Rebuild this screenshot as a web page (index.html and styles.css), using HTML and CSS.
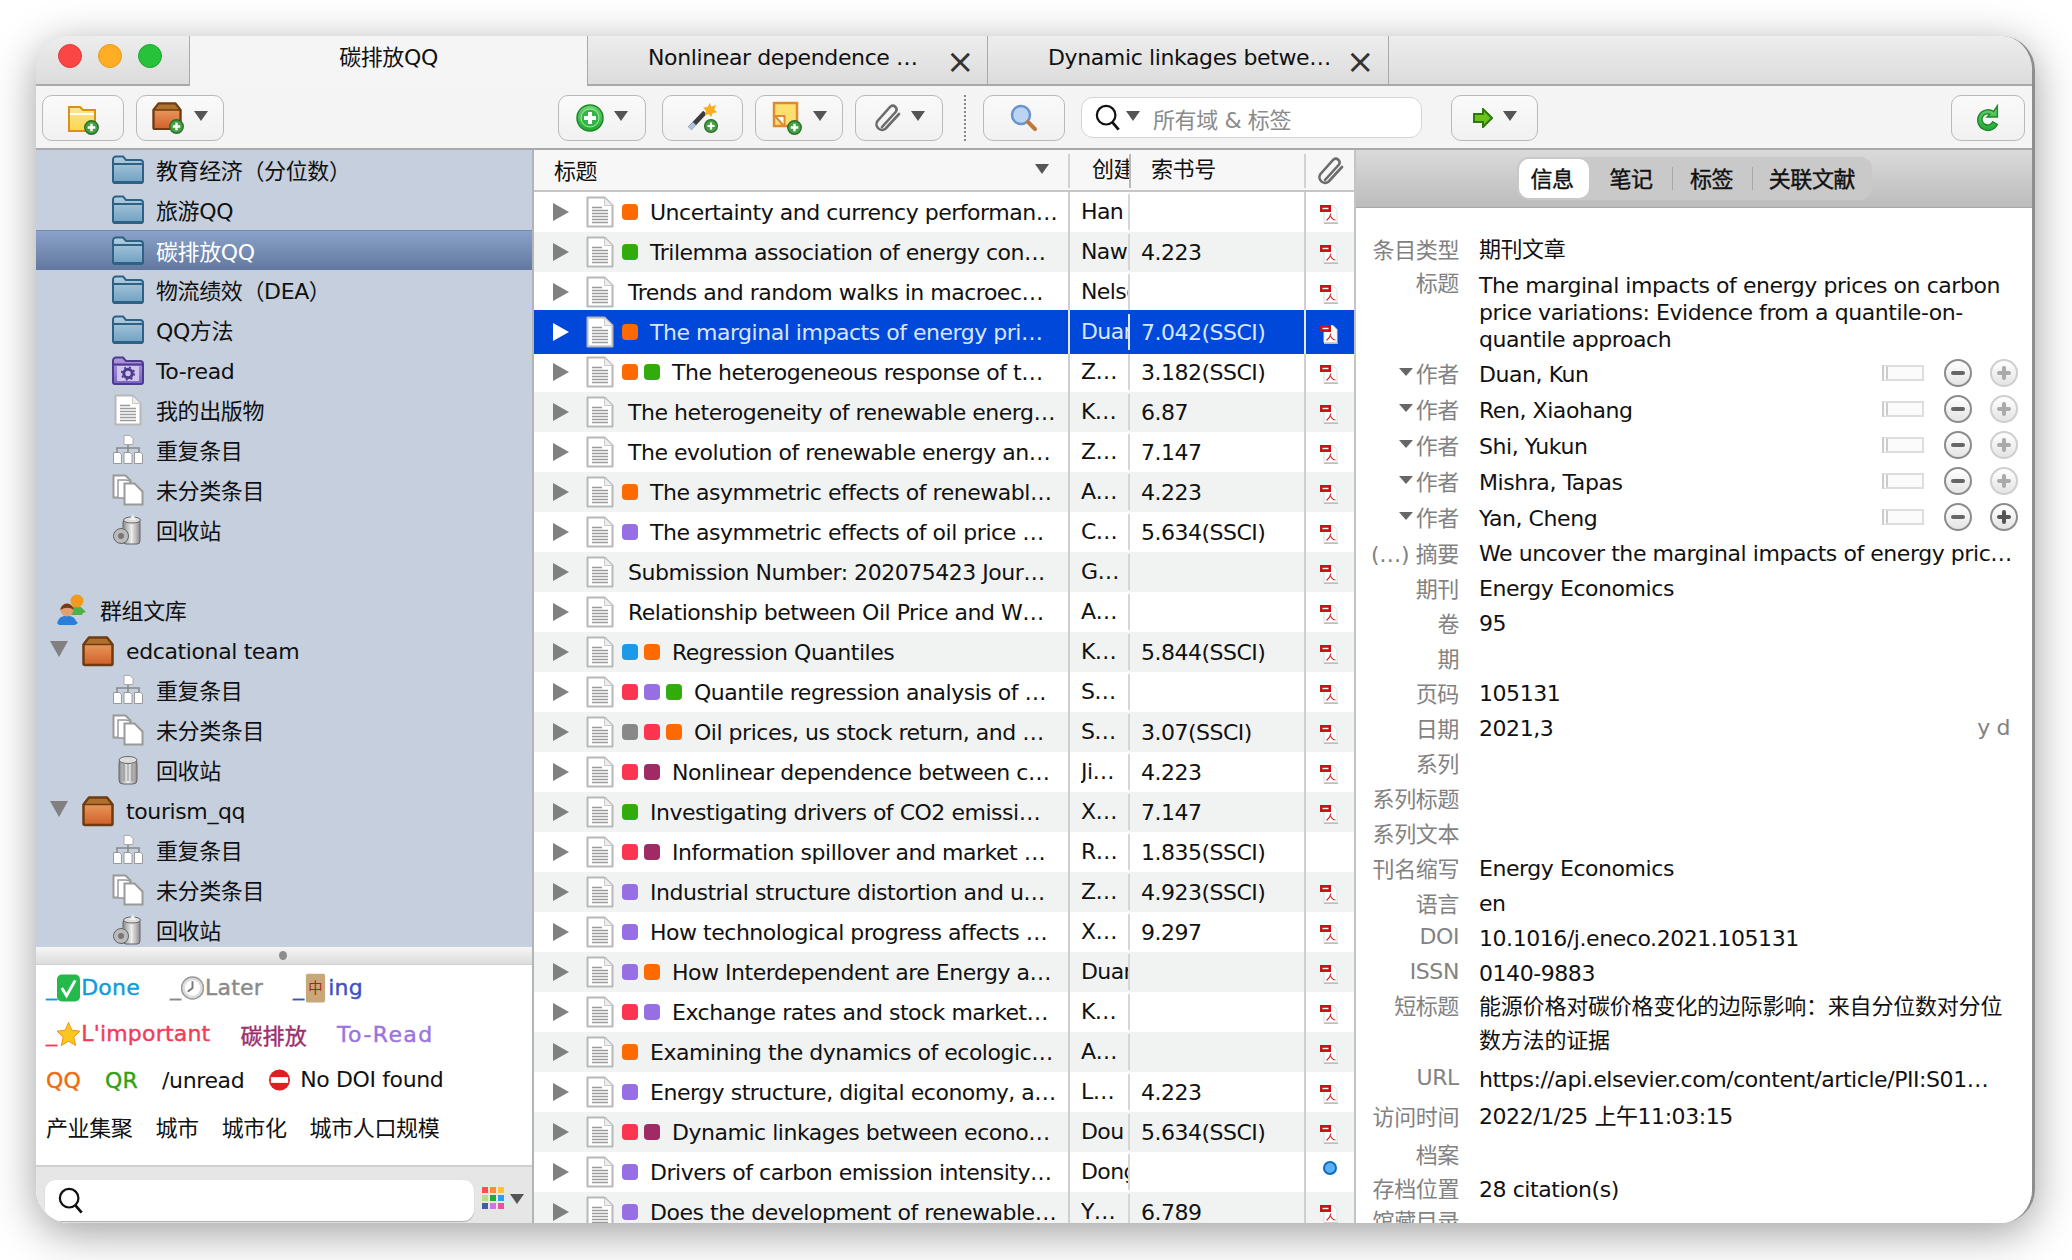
FILE: index.html
```html
<!DOCTYPE html>
<html lang="zh">
<head>
<meta charset="UTF-8">
<title>Zotero - 碳排放QQ</title>
<link rel="stylesheet" href="styles.css">
</head>
<body>
<svg class="defs" width="0" height="0">
  <defs>
    <linearGradient id="gBlue" x1="0" y1="0" x2="0" y2="1"><stop offset="0" stop-color="#b4cfe2"/><stop offset="1" stop-color="#6f9fc2"/></linearGradient>
    <linearGradient id="gPurple" x1="0" y1="0" x2="0" y2="1"><stop offset="0" stop-color="#b09ae0"/><stop offset="1" stop-color="#7c62c4"/></linearGradient>
    <linearGradient id="gBox" x1="0" y1="0" x2="0" y2="1"><stop offset="0" stop-color="#f0a86a"/><stop offset="1" stop-color="#d0602a"/></linearGradient>
    <linearGradient id="gYellow" x1="0" y1="0" x2="0" y2="1"><stop offset="0" stop-color="#fbe79e"/><stop offset="1" stop-color="#fbd64a"/></linearGradient>
    <linearGradient id="gGreen" x1="0" y1="0" x2="0" y2="1"><stop offset="0" stop-color="#6fd46f"/><stop offset="1" stop-color="#21a834"/></linearGradient>
    <linearGradient id="gTrash" x1="0" y1="0" x2="1" y2="0"><stop offset="0" stop-color="#8c8c8c"/><stop offset=".5" stop-color="#eee"/><stop offset="1" stop-color="#8c8c8c"/></linearGradient>
    <symbol id="doc" viewBox="0 0 28 32"><path d="M1.500 1.500h17l8 8v21h-25z" fill="#fff" stroke="#b8b8b8" stroke-width="2" stroke-linejoin="round"/><path d="M18.500 2v7.500h8" fill="#eee" stroke="#c8c8c8"/><path d="M6 11.500h10M6 14.500h16M6 17.500h16M6 20.500h16M6 23.500h16M6 26.500h16" stroke="#9a9a9a" stroke-width="1.400"/></symbol>
    <symbol id="folder" viewBox="0 0 32 30"><path d="M1 4.500a3 3 0 0 1 3-3h7l3 3.500h14a3 3 0 0 1 3 3v18a2 2 0 0 1-2 2H3a2 2 0 0 1-2-2z" fill="url(#gBlue)" stroke="#2e6285" stroke-width="2"/><path d="M1 9h30" stroke="#2e6285" stroke-width="2"/><path d="M2 27.500h28" stroke="#2e6285" stroke-width="3"/></symbol>
    <symbol id="smart" viewBox="0 0 32 30"><path d="M1 4.500a3 3 0 0 1 3-3h7l3 3.500h14a3 3 0 0 1 3 3v18a2 2 0 0 1-2 2H3a2 2 0 0 1-2-2z" fill="url(#gPurple)" stroke="#4e3b8e" stroke-width="2"/><path d="M1 8.500h30" stroke="#4e3b8e" stroke-width="2"/><rect x="5" y="10" width="22" height="15" fill="#cfc4ec"/><circle cx="16" cy="17.500" r="4.200" fill="none" stroke="#4e3b8e" stroke-width="3"/><circle cx="16" cy="17.500" r="6.200" fill="none" stroke="#4e3b8e" stroke-width="1.800" stroke-dasharray="2 2.900"/></symbol>
    <symbol id="dups" viewBox="0 0 32 32"><path d="M16 8v6M5 18v-4h22v4M16 14v4" stroke="#888" stroke-width="1.500" fill="none"/><path d="M12 1.500h6l3 3v6h-9z" fill="#fff" stroke="#aaa"/><path d="M1.500 18.500h6l2 2v9h-8zM12 18.500h6l2 2v9h-8zM22.500 18.500h6l2 2v9h-8z" fill="#fff" stroke="#999"/></symbol>
    <symbol id="unfiled" viewBox="0 0 32 32"><path d="M1.500 1.500h12l5 5v17h-17z" fill="#fff" stroke="#9a9a9a" stroke-width="2"/><path d="M6 6h8l4 1v17H6z" fill="#fff" stroke="#9a9a9a" stroke-width="1.500"/><path d="M12.500 9.500h10l8 8v13h-18z" fill="#fff" stroke="#9a9a9a" stroke-width="2"/></symbol>
    <symbol id="trashfull" viewBox="0 0 32 32"><rect x="11" y="5" width="17" height="25" rx="3" fill="url(#gTrash)" stroke="#666"/><ellipse cx="20" cy="6" rx="8.500" ry="3" fill="#ddd" stroke="#666"/><path d="M17 6l4-6 3 6z" fill="#eee"/><circle cx="9" cy="22" r="7.500" fill="#bbb" stroke="#666"/><circle cx="9" cy="22" r="3" fill="#777"/></symbol>
    <symbol id="trash" viewBox="0 0 32 32"><rect x="7" y="5" width="18" height="25" rx="4" fill="url(#gTrash)" stroke="#666"/><ellipse cx="16" cy="6" rx="9" ry="3.500" fill="#ddd" stroke="#666"/><path d="M12 10v17M16 10v17M20 10v17" stroke="#888"/></symbol>
    <symbol id="group" viewBox="0 0 32 32"><path d="M12 15c2-4 13-4 15 0l3 3-3 1-1 2H13z" fill="#4eb04a"/><circle cx="21" cy="7" r="6.500" fill="#f29a1e"/><path d="M2 27c2-7 16-7 18 0l2 2-3 2H3l-2-2z" fill="#2a80d8"/><circle cx="11" cy="16" r="6.500" fill="#e0a070"/><path d="M4.500 16a6.500 6.500 0 0 1 13 0c-3-3-9-3-13 0z" fill="#7a3a12"/></symbol>
    <symbol id="box" viewBox="0 0 32 30"><path d="M7 1.500h18l5.500 7v19a1.500 1.500 0 0 1-1.500 1.500H3a1.500 1.500 0 0 1-1.500-1.500v-19z" fill="url(#gBox)" stroke="#6e3c10" stroke-width="2.500" stroke-linejoin="round"/><path d="M7 2h18l5 6.500H2z" fill="#b0702e" stroke="#6e3c10" stroke-width="1.500"/></symbol>
    <symbol id="plusbadge" viewBox="0 0 14 14"><circle cx="7" cy="7" r="6.300" fill="#45a045" stroke="#2a6e2a" stroke-width="1.300"/><path d="M7 3.500v7M3.500 7h7" stroke="#fff" stroke-width="2.200"/></symbol>
    <symbol id="pdf" viewBox="0 0 18 19"><path d="M4 .5h9l4 4v13H4z" fill="#fff" stroke="#dcdcdc"/><rect x="0" y="0" width="11" height="7" fill="#c81414"/><rect x="2.500" y="2.800" width="6" height="1.400" fill="#fff"/><path d="M11 8.500c-.5 2-2 5-4.500 7M10.500 11c1 2 3 4 5 4" fill="none" stroke="#d83030" stroke-width="1.100"/><path d="M4 18.300h14" stroke="#bdbdbd" stroke-width="1.400"/></symbol>
    <symbol id="caret" viewBox="0 0 14 10"><path d="M0 0h14L7 10z" fill="#555"/></symbol>
    <symbol id="lens" viewBox="0 0 28 30"><circle cx="12" cy="12" r="10" fill="none" stroke="#111" stroke-width="2.400"/><path d="M18.500 19.500l7 8" stroke="#111" stroke-width="3"/></symbol>
    <symbol id="clip" viewBox="0 0 28 28"><path d="M9 23L23 7.500a3.800 3.800 0 0 0-5.500-5L4.500 17a5.600 5.600 0 0 0 8.200 7.500L26 10" fill="none" stroke="#6c6c6c" stroke-width="2.600" stroke-linecap="round"/></symbol>
  </defs>
</svg>

<div class="window">
  <div class="tabbar">
    <div class="lights"><i class="light red"></i><i class="light amber"></i><i class="light green"></i></div>
    <div class="tab active">碳排放QQ</div>
    <div class="tab"><span class="tab-name">Nonlinear dependence …</span><span class="tab-x">×</span></div>
    <div class="tab third"><span class="tab-name">Dynamic linkages betwe…</span><span class="tab-x">×</span></div>
  </div>

  <div class="toolbar">
    <button class="btn w82">
      <svg class="ic32" viewBox="0 0 32 32"><path d="M2 5h11l3 3h12v21H2z" fill="url(#gYellow)" stroke="#d8921a" stroke-width="2"/><path d="M3 12h24" stroke="#fff" stroke-width="2"/><use href="#plusbadge" x="17" y="18" width="15" height="15"/></svg>
    </button>
    <button class="btn w88">
      <svg class="ic32" viewBox="0 0 32 34"><use href="#box" x="0" y="1" width="30" height="28"/><use href="#plusbadge" x="17" y="18" width="15" height="15"/></svg>
      <svg class="caret"><use href="#caret"/></svg>
    </button>
    <button class="btn w88 gap-main">
      <svg class="ic28" viewBox="0 0 28 28"><circle cx="14" cy="14" r="13" fill="url(#gGreen)" stroke="#188a28" stroke-width="1.500"/><circle cx="14" cy="14" r="9" fill="#35b44a" stroke="#a8e8a8"/><path d="M14 8v12M8 14h12" stroke="#fff" stroke-width="4"/></svg>
      <svg class="caret"><use href="#caret"/></svg>
    </button>
    <button class="btn w81 gap-wand">
      <svg class="ic32" viewBox="0 0 34 34"><path d="M3 28L19 11" stroke="#3c3c3c" stroke-width="5"/><path d="M3 28l5-5" stroke="#a8c4e0" stroke-width="5"/><path d="M24 1l2 4 5-2-2 5 3 3-5 1-1 4-3-3-4 1 1-5-3-3 5-1z" fill="#f7b020"/><use href="#plusbadge" x="18" y="18" width="15" height="15"/></svg>
    </button>
    <button class="btn w88">
      <svg class="ic32" viewBox="0 0 32 34"><rect x="3" y="2" width="23" height="23" fill="#fbe070" stroke="#e08a30" stroke-width="2.500"/><path d="M3.500 15h10v10" fill="#fff" stroke="#e08a30" stroke-width="2"/><path d="M4 15l9 10" stroke="#e08a30" stroke-width="2"/><use href="#plusbadge" x="16" y="19" width="15" height="15"/></svg>
      <svg class="caret"><use href="#caret"/></svg>
    </button>
    <button class="btn w88">
      <svg class="ic28"><use href="#clip"/></svg>
      <svg class="caret"><use href="#caret"/></svg>
    </button>
    <div class="dots"></div>
    <button class="btn w82 gap-sep">
      <svg class="ic28" viewBox="0 0 28 28"><circle cx="11" cy="11" r="9" fill="#bcd4f4" stroke="#6a94cc" stroke-width="2.500"/><path d="M18 18l7 7" stroke="#c07838" stroke-width="4" stroke-linecap="round"/></svg>
    </button>
    <div class="search-top">
      <svg class="lens"><use href="#lens"/></svg>
      <svg class="caret"><use href="#caret"/></svg>
      <span class="placeholder">所有域 &amp; 标签</span>
    </div>
    <button class="btn w86 gap-search">
      <svg class="ic20" viewBox="0 0 20 20"><path d="M1 6h9V1l9 9-9 9v-5H1z" fill="#6cc01c" stroke="#2c7a0c" stroke-width="2"/></svg>
      <svg class="caret"><use href="#caret"/></svg>
    </button>
    <button class="btn w74 push-right">
      <svg class="ic28" viewBox="0 0 28 32"><path d="M20 9A11 11 0 1 0 24 23l-5-3a6 6 0 1 1-3-8l-3 3 11 0 0-12z" fill="url(#gGreen)" stroke="#1e8a30" stroke-width="1.500"/></svg>
    </button>
  </div>

  <div class="main">
    <aside class="sidebar">
      <div class="tree">
        <div class="node"><svg class="nic"><use href="#folder"/></svg>教育经济（分位数）</div>
        <div class="node"><svg class="nic"><use href="#folder"/></svg>旅游QQ</div>
        <div class="node selected"><svg class="nic"><use href="#folder"/></svg>碳排放QQ</div>
        <div class="node"><svg class="nic"><use href="#folder"/></svg>物流绩效（DEA）</div>
        <div class="node"><svg class="nic"><use href="#folder"/></svg>QQ方法</div>
        <div class="node lat"><svg class="nic"><use href="#smart"/></svg>To-read</div>
        <div class="node"><svg class="nic"><use href="#doc"/></svg>我的出版物</div>
        <div class="node"><svg class="nic"><use href="#dups"/></svg>重复条目</div>
        <div class="node"><svg class="nic"><use href="#unfiled"/></svg>未分类条目</div>
        <div class="node"><svg class="nic"><use href="#trashfull"/></svg>回收站</div>
        <div class="node"></div>
        <div class="node top"><svg class="nic"><use href="#group"/></svg>群组文库</div>
        <div class="node lib lat"><i class="tree-open"></i><svg class="nic"><use href="#box"/></svg>edcational team</div>
        <div class="node"><svg class="nic"><use href="#dups"/></svg>重复条目</div>
        <div class="node"><svg class="nic"><use href="#unfiled"/></svg>未分类条目</div>
        <div class="node"><svg class="nic"><use href="#trash"/></svg>回收站</div>
        <div class="node lib lat"><i class="tree-open"></i><svg class="nic"><use href="#box"/></svg>tourism_qq</div>
        <div class="node"><svg class="nic"><use href="#dups"/></svg>重复条目</div>
        <div class="node"><svg class="nic"><use href="#unfiled"/></svg>未分类条目</div>
        <div class="node"><svg class="nic"><use href="#trashfull"/></svg>回收站</div>
      </div>
      <div class="splitter"><i class="grip"></i></div>
      <div class="tags">
        <div class="tagrow wide">
          <span class="c-done">_<svg class="emoji" viewBox="0 0 24 30"><rect x="0" y="1" width="24" height="28" rx="5" fill="#25b84a"/><path d="M5 15l5 8 9-16" fill="none" stroke="#fff" stroke-width="3"/></svg>Done</span>
          <span class="c-later">_<svg class="emoji" viewBox="0 0 24 30"><circle cx="12" cy="15" r="11.500" fill="#ddd" stroke="#999" stroke-width="1.500"/><circle cx="12" cy="15" r="8" fill="#fff"/><path d="M12 8v7l-5 4" fill="none" stroke="#777" stroke-width="2"/></svg>Later</span>
          <span class="c-ing">_<svg class="emoji" viewBox="0 0 24 30"><rect x="2" y="0" width="20" height="30" rx="2" fill="#c8a878"/><text x="12" y="20" class="tile">中</text></svg>ing</span>
        </div>
        <div class="tagrow wide">
          <span class="c-imp">_<svg class="emoji" viewBox="0 0 24 30"><path d="M12 3l3.500 8 8.500 1-6.500 6 2 9-7.500-4.500L4.500 27l2-9L0 12l8.500-1z" fill="#f8c820" stroke="#f09010"/></svg>L'important</span>
          <span class="c-carbon">碳排放</span>
          <span class="c-read">To-Read</span>
        </div>
        <div class="tagrow">
          <span class="c-qq">QQ</span>
          <span class="c-qr">QR</span>
          <span>/unread</span>
          <span><svg class="emoji noentry" viewBox="0 0 24 30"><circle cx="12" cy="15" r="11" fill="#e02020"/><rect x="3" y="12" width="18" height="6" fill="#fff"/></svg>No DOI found</span>
        </div>
        <div class="tagrow cjk">
          <span>产业集聚</span><span>城市</span><span>城市化</span><span>城市人口规模</span>
        </div>
      </div>
      <div class="filter">
        <div class="filter-box"><svg class="lens"><use href="#lens"/></svg></div>
        <div class="swatches">
          <i class="s1"></i><i class="s2"></i><i class="s3"></i><i class="s4"></i><i class="s5"></i><i class="s6"></i><i class="s7"></i><i class="s8"></i><i class="s9"></i>
        </div>
        <svg class="caret"><use href="#caret"/></svg>
      </div>
    </aside>

    <section class="list">
      <div class="list-head">
        <div class="h-title"><span>标题</span><svg class="caret"><use href="#caret"/></svg></div>
        <div class="h-creator"><span>创建</span></div>
        <div class="h-call">索书号</div>
        <div class="h-att"><svg class="ic26"><use href="#clip"/></svg></div>
      </div>
      <div class="rows">
        <div class="row"><div class="c-title"><i class="tri"></i><svg class="doc"><use href="#doc"/></svg><i class="tag orange"></i><span class="t">Uncertainty and currency performan…</span></div><div class="c-creator"><span>Han</span></div><div class="c-call"></div><div class="c-att"><svg class="pdf"><use href="#pdf"/></svg></div></div>
        <div class="row"><div class="c-title"><i class="tri"></i><svg class="doc"><use href="#doc"/></svg><i class="tag green"></i><span class="t">Trilemma association of energy con…</span></div><div class="c-creator"><span>Nawaz</span></div><div class="c-call">4.223</div><div class="c-att"><svg class="pdf"><use href="#pdf"/></svg></div></div>
        <div class="row"><div class="c-title"><i class="tri"></i><svg class="doc"><use href="#doc"/></svg><span class="t">Trends and random walks in macroec…</span></div><div class="c-creator"><span>Nelson</span></div><div class="c-call"></div><div class="c-att"><svg class="pdf"><use href="#pdf"/></svg></div></div>
        <div class="row current"><div class="c-title"><i class="tri"></i><svg class="doc"><use href="#doc"/></svg><i class="tag orange"></i><span class="t">The marginal impacts of energy pri…</span></div><div class="c-creator"><span>Duan</span></div><div class="c-call">7.042(SSCI)</div><div class="c-att"><svg class="pdf"><use href="#pdf"/></svg></div></div>
        <div class="row"><div class="c-title"><i class="tri"></i><svg class="doc"><use href="#doc"/></svg><i class="tag orange"></i><i class="tag green"></i><span class="t">The heterogeneous response of t…</span></div><div class="c-creator"><span>Z…</span></div><div class="c-call">3.182(SSCI)</div><div class="c-att"><svg class="pdf"><use href="#pdf"/></svg></div></div>
        <div class="row"><div class="c-title"><i class="tri"></i><svg class="doc"><use href="#doc"/></svg><span class="t">The heterogeneity of renewable energ…</span></div><div class="c-creator"><span>K…</span></div><div class="c-call">6.87</div><div class="c-att"><svg class="pdf"><use href="#pdf"/></svg></div></div>
        <div class="row"><div class="c-title"><i class="tri"></i><svg class="doc"><use href="#doc"/></svg><span class="t">The evolution of renewable energy an…</span></div><div class="c-creator"><span>Z…</span></div><div class="c-call">7.147</div><div class="c-att"><svg class="pdf"><use href="#pdf"/></svg></div></div>
        <div class="row"><div class="c-title"><i class="tri"></i><svg class="doc"><use href="#doc"/></svg><i class="tag orange"></i><span class="t">The asymmetric effects of renewabl…</span></div><div class="c-creator"><span>A…</span></div><div class="c-call">4.223</div><div class="c-att"><svg class="pdf"><use href="#pdf"/></svg></div></div>
        <div class="row"><div class="c-title"><i class="tri"></i><svg class="doc"><use href="#doc"/></svg><i class="tag purple"></i><span class="t">The asymmetric effects of oil price …</span></div><div class="c-creator"><span>C…</span></div><div class="c-call">5.634(SSCI)</div><div class="c-att"><svg class="pdf"><use href="#pdf"/></svg></div></div>
        <div class="row"><div class="c-title"><i class="tri"></i><svg class="doc"><use href="#doc"/></svg><span class="t">Submission Number: 202075423 Jour…</span></div><div class="c-creator"><span>G…</span></div><div class="c-call"></div><div class="c-att"><svg class="pdf"><use href="#pdf"/></svg></div></div>
        <div class="row"><div class="c-title"><i class="tri"></i><svg class="doc"><use href="#doc"/></svg><span class="t">Relationship between Oil Price and W…</span></div><div class="c-creator"><span>A…</span></div><div class="c-call"></div><div class="c-att"><svg class="pdf"><use href="#pdf"/></svg></div></div>
        <div class="row"><div class="c-title"><i class="tri"></i><svg class="doc"><use href="#doc"/></svg><i class="tag blue"></i><i class="tag orange"></i><span class="t">Regression Quantiles</span></div><div class="c-creator"><span>K…</span></div><div class="c-call">5.844(SSCI)</div><div class="c-att"><svg class="pdf"><use href="#pdf"/></svg></div></div>
        <div class="row"><div class="c-title"><i class="tri"></i><svg class="doc"><use href="#doc"/></svg><i class="tag red"></i><i class="tag purple"></i><i class="tag green"></i><span class="t">Quantile regression analysis of …</span></div><div class="c-creator"><span>S…</span></div><div class="c-call"></div><div class="c-att"><svg class="pdf"><use href="#pdf"/></svg></div></div>
        <div class="row"><div class="c-title"><i class="tri"></i><svg class="doc"><use href="#doc"/></svg><i class="tag grey"></i><i class="tag red"></i><i class="tag orange"></i><span class="t">Oil prices, us stock return, and …</span></div><div class="c-creator"><span>S…</span></div><div class="c-call">3.07(SSCI)</div><div class="c-att"><svg class="pdf"><use href="#pdf"/></svg></div></div>
        <div class="row"><div class="c-title"><i class="tri"></i><svg class="doc"><use href="#doc"/></svg><i class="tag red"></i><i class="tag maroon"></i><span class="t">Nonlinear dependence between c…</span></div><div class="c-creator"><span>Ji…</span></div><div class="c-call">4.223</div><div class="c-att"><svg class="pdf"><use href="#pdf"/></svg></div></div>
        <div class="row"><div class="c-title"><i class="tri"></i><svg class="doc"><use href="#doc"/></svg><i class="tag green"></i><span class="t">Investigating drivers of CO2 emissi…</span></div><div class="c-creator"><span>X…</span></div><div class="c-call">7.147</div><div class="c-att"><svg class="pdf"><use href="#pdf"/></svg></div></div>
        <div class="row"><div class="c-title"><i class="tri"></i><svg class="doc"><use href="#doc"/></svg><i class="tag red"></i><i class="tag maroon"></i><span class="t">Information spillover and market …</span></div><div class="c-creator"><span>R…</span></div><div class="c-call">1.835(SSCI)</div><div class="c-att"></div></div>
        <div class="row"><div class="c-title"><i class="tri"></i><svg class="doc"><use href="#doc"/></svg><i class="tag purple"></i><span class="t">Industrial structure distortion and u…</span></div><div class="c-creator"><span>Z…</span></div><div class="c-call">4.923(SSCI)</div><div class="c-att"><svg class="pdf"><use href="#pdf"/></svg></div></div>
        <div class="row"><div class="c-title"><i class="tri"></i><svg class="doc"><use href="#doc"/></svg><i class="tag purple"></i><span class="t">How technological progress affects …</span></div><div class="c-creator"><span>X…</span></div><div class="c-call">9.297</div><div class="c-att"><svg class="pdf"><use href="#pdf"/></svg></div></div>
        <div class="row"><div class="c-title"><i class="tri"></i><svg class="doc"><use href="#doc"/></svg><i class="tag purple"></i><i class="tag orange"></i><span class="t">How Interdependent are Energy a…</span></div><div class="c-creator"><span>Duan</span></div><div class="c-call"></div><div class="c-att"><svg class="pdf"><use href="#pdf"/></svg></div></div>
        <div class="row"><div class="c-title"><i class="tri"></i><svg class="doc"><use href="#doc"/></svg><i class="tag red"></i><i class="tag purple"></i><span class="t">Exchange rates and stock market…</span></div><div class="c-creator"><span>K…</span></div><div class="c-call"></div><div class="c-att"><svg class="pdf"><use href="#pdf"/></svg></div></div>
        <div class="row"><div class="c-title"><i class="tri"></i><svg class="doc"><use href="#doc"/></svg><i class="tag orange"></i><span class="t">Examining the dynamics of ecologic…</span></div><div class="c-creator"><span>A…</span></div><div class="c-call"></div><div class="c-att"><svg class="pdf"><use href="#pdf"/></svg></div></div>
        <div class="row"><div class="c-title"><i class="tri"></i><svg class="doc"><use href="#doc"/></svg><i class="tag purple"></i><span class="t">Energy structure, digital economy, a…</span></div><div class="c-creator"><span>L…</span></div><div class="c-call">4.223</div><div class="c-att"><svg class="pdf"><use href="#pdf"/></svg></div></div>
        <div class="row"><div class="c-title"><i class="tri"></i><svg class="doc"><use href="#doc"/></svg><i class="tag red"></i><i class="tag maroon"></i><span class="t">Dynamic linkages between econo…</span></div><div class="c-creator"><span>Dou</span></div><div class="c-call">5.634(SSCI)</div><div class="c-att"><svg class="pdf"><use href="#pdf"/></svg></div></div>
        <div class="row"><div class="c-title"><i class="tri"></i><svg class="doc"><use href="#doc"/></svg><i class="tag purple"></i><span class="t">Drivers of carbon emission intensity…</span></div><div class="c-creator"><span>Dong</span></div><div class="c-call"></div><div class="c-att"><i class="dot"></i></div></div>
        <div class="row"><div class="c-title"><i class="tri"></i><svg class="doc"><use href="#doc"/></svg><i class="tag purple"></i><span class="t">Does the development of renewable…</span></div><div class="c-creator"><span>Y…</span></div><div class="c-call">6.789</div><div class="c-att"><svg class="pdf"><use href="#pdf"/></svg></div></div>
      </div>
    </section>

    <section class="panel">
      <div class="panel-head">
        <div class="seg">
          <span class="seg-item on">信息</span>
          <span class="seg-item w83">笔记</span>
          <span class="seg-item w80 sep">标签</span>
          <span class="seg-item w118 sep">关联文献</span>
        </div>
      </div>
      <div class="fields">
        <div class="f"><label>条目类型</label><div class="v">期刊文章</div></div>
        <div class="f multi"><label>标题</label><div class="v">The marginal impacts of energy prices on carbon price variations: Evidence from a quantile-on-quantile approach</div></div>
        <div class="f author"><label><i class="fold"></i>作者</label><div class="v">Duan, Kun</div><i class="mode"></i><i class="round minus"></i><i class="round plus"></i></div>
        <div class="f author"><label><i class="fold"></i>作者</label><div class="v">Ren, Xiaohang</div><i class="mode"></i><i class="round minus"></i><i class="round plus"></i></div>
        <div class="f author"><label><i class="fold"></i>作者</label><div class="v">Shi, Yukun</div><i class="mode"></i><i class="round minus"></i><i class="round plus"></i></div>
        <div class="f author"><label><i class="fold"></i>作者</label><div class="v">Mishra, Tapas</div><i class="mode"></i><i class="round minus"></i><i class="round plus"></i></div>
        <div class="f author"><label><i class="fold"></i>作者</label><div class="v">Yan, Cheng</div><i class="mode"></i><i class="round minus"></i><i class="round plus dark"></i></div>
        <div class="f"><label>(…) 摘要</label><div class="v">We uncover the marginal impacts of energy pric…</div></div>
        <div class="f"><label>期刊</label><div class="v">Energy Economics</div></div>
        <div class="f"><label>卷</label><div class="v">95</div></div>
        <div class="f"><label>期</label><div class="v"></div></div>
        <div class="f"><label>页码</label><div class="v">105131</div></div>
        <div class="f"><label>日期</label><div class="v">2021,3</div><span class="ymd">y d</span></div>
        <div class="f"><label>系列</label><div class="v"></div></div>
        <div class="f"><label>系列标题</label><div class="v"></div></div>
        <div class="f"><label>系列文本</label><div class="v"></div></div>
        <div class="f"><label>刊名缩写</label><div class="v">Energy Economics</div></div>
        <div class="f"><label>语言</label><div class="v">en</div></div>
        <div class="f"><label>DOI</label><div class="v">10.1016/j.eneco.2021.105131</div></div>
        <div class="f"><label>ISSN</label><div class="v">0140-9883</div></div>
        <div class="f short"><label>短标题</label><div class="v">能源价格对碳价格变化的边际影响：来自分位数对分位数方法的证据</div></div>
        <div class="f h37"><label>URL</label><div class="v">https://api.elsevier.com/content/article/PII:S01…</div></div>
        <div class="f h37"><label>访问时间</label><div class="v">2022/1/25 上午11:03:15</div></div>
        <div class="f h40"><label>档案</label><div class="v"></div></div>
        <div class="f h30"><label>存档位置</label><div class="v">28 citation(s)</div></div>
        <div class="f"><label>馆藏目录</label><div class="v"></div></div>
      </div>
    </section>
  </div>
</div>
</body>
</html>
```

FILE: styles.css
```css
* {
    box-sizing: border-box;
}
html, body {
    margin: 0;
    height: 100%;
    background: #fff;
    overflow: hidden;
}
body {
    padding: 36px 0 0 36px;
    font-family: "DejaVu Sans", "Noto Sans CJK SC", sans-serif;
    font-size: 22px;
    letter-spacing: -0.38px;
    color: #111;
}
.defs {
    display: block;
    height: 0;
}
svg {
    display: block;
    flex: none;
}
i {
    display: block;
    flex: none;
}

.window {
    width: 1999px;
    height: 1187px;
    border-radius: 34px;
    overflow: hidden;
    display: flex;
    flex-direction: column;
    border-right: 3px solid #8e8e8e;
    box-shadow: 0 10px 44px rgba(0, 0, 0, 0.38);
    background: #f4f4f4;
}

/* tabs */
.tabbar {
    height: 50px;
    flex: none;
    display: flex;
    background: linear-gradient(#ededed, #dcdcdc);
    border-bottom: 2px solid #a9a9a9;
}
.lights {
    width: 153px;
    display: flex;
    gap: 16px;
    padding: 8px 0 0 22px;
}
.light {
    width: 24px;
    height: 24px;
    border-radius: 50%;
}
.light.red { background: #fb4646; border: 1px solid #e23a3a; }
.light.amber { background: #ffad24; border: 1px solid #e89a1a; }
.light.green { background: #27c13a; border: 1px solid #1fa52f; }
.tab {
    width: 400px;
    height: 50px;
    display: flex;
    align-items: center;
    padding: 0 0 8px 60px;
    border-right: 1px solid #a9a9a9;
    white-space: nowrap;
}
.tab.third {
    width: 401px;
}
.tab.active {
    width: 399px;
    background: #f5f5f5;
    border-left: 1px solid #a9a9a9;
    justify-content: center;
    padding: 0 0 12px 0;
    height: 50px;
}
.tab-name {
    width: 312px;
    overflow: hidden;
}
.tab-x {
    font-size: 34px;
    line-height: 30px;
    color: #333;
    margin: 8px 0 0 -14px;
}

/* toolbar */
.toolbar {
    height: 64px;
    flex: none;
    display: flex;
    align-items: flex-start;
    padding: 9px 7px 0 6px;
    gap: 12px;
    background: #f4f4f4;
    border-bottom: 2px solid #a9a9a9;
}
.btn {
    height: 46px;
    padding: 0;
    display: flex;
    align-items: center;
    justify-content: center;
    gap: 10px;
    background: linear-gradient(#fafafa, #f1f1f1);
    border: 1px solid #b9b9b9;
    border-radius: 10px;
}
.w74 { width: 74px; }
.w81 { width: 81px; }
.w82 { width: 82px; }
.w86 { width: 87px; }
.w88 { width: 88px; }
.gap-main { margin-left: 322px; }
.gap-wand { margin-left: 4px; }
.gap-sep { margin-left: 5px; }
.gap-search { margin-left: 17px; }
.push-right { margin-left: auto; }
.caret {
    width: 14px;
    height: 10px;
    margin-bottom: 4px;
}
.ic20 { width: 20px; height: 20px; }
.ic26 { width: 28px; height: 28px; }
.ic28 { width: 28px; height: 30px; }
.ic32 { width: 32px; height: 34px; }
.dots {
    width: 2px;
    height: 46px;
    margin-left: 9px;
    border-left: 2px dotted #888;
}
.search-top {
    width: 341px;
    height: 41px;
    margin: 2px 0 0 4px;
    display: flex;
    align-items: center;
    padding-left: 13px;
    gap: 5px;
    background: #fff;
    border: 1px solid #d4d4d4;
    border-radius: 12px;
}
.lens {
    width: 26px;
    height: 28px;
}
.placeholder {
    color: #8a8a8a;
    margin-left: 8px;
}

.main {
    flex: 1;
    min-height: 0;
    display: flex;
}

/* left pane */
.sidebar {
    width: 498px;
    flex: none;
    display: flex;
    flex-direction: column;
    border-right: 2px solid #b4b4b4;
    background: #fff;
}
.tree {
    height: 797px;
    flex: none;
    overflow: hidden;
    background: #c5cfdd;
}
.node {
    height: 40px;
    display: flex;
    align-items: center;
    padding: 0 0 2px 76px;
    white-space: nowrap;
}
.node .nic {
    margin-bottom: -2px;
}
.node.lat {
    padding-top: 2px;
    padding-bottom: 0;
}
.node.lat .nic {
    margin-bottom: 0;
}
.node.selected {
    color: #fff;
    background: linear-gradient(#8aa2c9, #62789f);
    border-top: 1px solid #7189b4;
}
.nic {
    width: 32px;
    height: 32px;
    margin-right: 12px;
}
.node.top {
    padding-left: 20px;
}
.node.lib {
    padding-left: 14px;
}
.node.lib .nic {
    margin-left: 14px;
}
.tree-open {
    width: 0;
    height: 0;
    border-style: solid;
    border-width: 16px 9px 0;
    border-color: #808080 transparent transparent;
    margin-bottom: 4px;
}
.splitter {
    height: 18px;
    flex: none;
    display: flex;
    justify-content: center;
    align-items: center;
    background: linear-gradient(#f6f6f6, #dcdcdc);
    border-bottom: 1px solid #d0d0d0;
    padding-right: 2px;
}
.grip {
    width: 8px;
    height: 9px;
    border-radius: 50%;
    background: #8d8d8d;
}
.tags {
    height: 200px;
    flex: none;
    padding-left: 10px;
    background: #fff;
}
.tagrow {
    height: 46px;
    display: flex;
    align-items: center;
    gap: 24px;
    white-space: nowrap;
}
.tagrow.wide {
    gap: 30px;
}
.tagrow.cjk {
    gap: 23px;
}
.emoji {
    display: inline-block;
    width: 23px;
    height: 30px;
    margin-right: 1px;
    vertical-align: -8px;
}
.noentry {
    margin-right: 9px;
}
.tile {
    font-size: 15px;
    fill: #b02020;
    text-anchor: middle;
}
.c-done, .c-later, .c-ing, .c-imp, .c-carbon, .c-read, .c-qq, .c-qr {
    -webkit-text-stroke: 0.4px;
    letter-spacing: 0.2px;
}
.c-done { color: #0e9cdc; }
.c-later { color: #8a8a8a; }
.c-ing { color: #3e50c4; }
.c-imp { color: #f23c58; }
.c-carbon { color: #9c2f6c; }
.c-read { color: #9a74e0; letter-spacing: 1.4px; }
.c-qq { color: #ef6c0c; }
.c-qr { color: #33a116; }
.filter {
    flex: 1;
    display: flex;
    align-items: flex-start;
    padding: 13px 0 0 9px;
    background: #e6e6e6;
    border-top: 2px solid #d0d0d0;
}
.filter-box {
    width: 429px;
    height: 41px;
    display: flex;
    align-items: center;
    padding-left: 13px;
    background: #fff;
    border-radius: 11px;
    box-shadow: 0 1px 1px #aaa;
}
.swatches {
    display: grid;
    grid-template-columns: repeat(3, 6px);
    grid-auto-rows: 6px;
    gap: 2px;
    margin: 7px 6px 0 8px;
}
.filter .caret {
    margin-top: 14px;
}
.s1 { background: #ff4d4d; }
.s2 { background: #ff8a33; }
.s3 { background: #ffc233; }
.s4 { background: #b4e08c; }
.s5 { background: #1eaa3c; }
.s6 { background: #2d9ee8; }
.s7 { background: #3c5fa8; }
.s8 { background: #c878e0; }
.s9 { background: #f04fa0; }

/* item list */
.list {
    width: 822px;
    flex: none;
    border-right: 2px solid #c4c4c4;
    overflow: hidden;
    background: #fff;
}
.list-head {
    height: 42px;
    display: flex;
    align-items: center;
    padding-top: 2px;
    border-bottom: 2px solid #c6c6c6;
    background: #f7f7f7;
}
.h-title {
    width: 536px;
    display: flex;
    align-items: center;
    justify-content: space-between;
    padding: 0 19px 0 20px;
    height: 34px;
    border-right: 2px solid #d2d2d2;
}
.h-title span {
    margin-top: -5px;
}
.h-creator {
    width: 61px;
    height: 34px;
    padding-left: 22px;
    overflow: hidden;
    white-space: nowrap;
    line-height: 32px;
    border-right: 2px solid #b8b8b8;
}
.h-call {
    width: 175px;
    padding-left: 20px;
    height: 34px;
    line-height: 32px;
    border-right: 2px solid #d2d2d2;
}
.h-att {
    flex: 1;
    display: flex;
    justify-content: center;
}
.row {
    height: 40px;
    display: flex;
    align-items: stretch;
    white-space: nowrap;
}
.row:nth-child(even) {
    background: #f1f3f3;
}
.row.current {
    height: 44px;
    margin: -2px 0;
    position: relative;
    z-index: 1;
    color: #d8e6ff;
    background: #0048da;
}
.c-title {
    width: 536px;
    display: flex;
    align-items: center;
    padding-left: 19px;
    overflow: hidden;
    border-right: 2px solid #cfcfcf;
}
.tri {
    width: 0;
    height: 0;
    margin-right: 17px;
    border-style: solid;
    border-width: 9px 0 9px 16px;
    border-color: transparent transparent transparent #808080;
}
.doc {
    width: 28px;
    height: 32px;
}
.tag {
    width: 16px;
    height: 16px;
    margin-left: 6px;
    border-radius: 4px;
}
.doc + .tag { margin-left: 8px; }
.orange { background: #ff6a00; }
.green { background: #32ac0c; }
.purple { background: #9670e2; }
.red { background: #fb3450; }
.maroon { background: #a02a64; }
.blue { background: #1a9ae8; }
.grey { background: #888; }
.t {
    margin-left: 12px;
    letter-spacing: -0.48px;
}
.doc + .t { margin-left: 14px; }
.c-creator {
    width: 60px;
    display: flex;
    align-items: center;
    padding-left: 11px;
    letter-spacing: -0.6px;
}
.c-creator span {
    width: 49px;
    height: 36px;
    line-height: 36px;
    overflow: hidden;
    border-right: 2px solid #d6d6d6;
}
.c-call {
    width: 176px;
    padding-left: 11px;
    line-height: 41px;
    letter-spacing: -0.5px;
    border-right: 2px solid #cfcfcf;
}
.c-att {
    flex: 1;
    display: flex;
    align-items: center;
    padding-left: 14px;
}
.row.current .c-title,
.row.current .c-call,
.row.current .c-creator span {
    border-right-color: #dfe8ff;
}
.row.current .c-call {
    line-height: 45px;
}
.row.current .tri {
    border-left-color: #fff;
}
.pdf {
    width: 18px;
    height: 19px;
    margin-top: 5px;
}
.dot {
    width: 14px;
    height: 14px;
    margin: -8px 0 0 3px;
    border-radius: 50%;
    background: #5ab2f5;
    border: 2px solid #0e6cc0;
}

/* right pane */
.panel {
    flex: 1;
    min-width: 0;
    overflow: hidden;
    background: #fff;
}
.panel-head {
    height: 58px;
    display: flex;
    justify-content: center;
    padding-top: 7px;
    background: linear-gradient(#dadada, #bcbcbc);
    border-bottom: 1px solid #a8a8a8;
}
.seg {
    height: 43px;
    display: flex;
    padding: 2px;
    border-radius: 12px;
    background: #c9c9c9;
    -webkit-text-stroke: 0.4px;
}
.seg-item {
    display: flex;
    align-items: center;
    justify-content: center;
    padding-bottom: 4px;
}
.seg-item.on {
    width: 70px;
    padding-right: 3px;
    background: #fff;
    border-radius: 10px;
}
.w83 { width: 83px; padding-left: 2px; }
.w80 { width: 80px; }
.w118 { width: 118px; padding-left: 3px; }
.seg-item.sep {
    position: relative;
}
.seg-item.sep::before {
    content: "";
    position: absolute;
    left: 0;
    top: 8px;
    bottom: 8px;
    border-left: 1px solid #a8a8a8;
}
.fields {
    padding-top: 23px;
    padding-left: 0;
}
.f {
    height: 35px;
    display: flex;
    align-items: center;
    white-space: nowrap;
}
.f label {
    width: 103px;
    flex: none;
    display: flex;
    justify-content: flex-end;
    align-items: center;
    padding-bottom: 2px;
    color: #828282;
}
.f .v {
    margin-left: 20px;
    padding-top: 2px;
    line-height: 27px;
    letter-spacing: -0.44px;
}
.f.multi {
    height: 89px;
    align-items: flex-start;
    padding-top: 4px;
}
.f.multi label { line-height: 27px; }
.f.multi .v {
    width: 540px;
    white-space: normal;
}
.f.short {
    height: 70px;
    align-items: flex-start;
}
.f.short label { line-height: 34px; }
.f.short .v {
    width: 530px;
    padding-top: 0;
    white-space: normal;
    line-height: 34px;
    letter-spacing: -0.2px;
}
.f.author { height: 36px; }
.f.h37 { height: 37px; }
.f.h40 { height: 40px; }
.f.h30 { height: 28px; }
.fold {
    width: 0;
    height: 0;
    margin-right: 3px;
    border-style: solid;
    border-width: 8px 7px 0;
    border-color: #666 transparent transparent;
}
.mode {
    width: 42px;
    height: 16px;
    margin-left: auto;
    background: #fbfbfb;
    border: 2px solid #ddd;
    border-left: 6px double #ccc;
}
.round {
    width: 28px;
    height: 28px;
    border-radius: 50%;
    border: 2px solid #8c8c8c;
    background: linear-gradient(#fff, #e4e4e4);
    position: relative;
}
.round::before {
    content: "";
    position: absolute;
    left: 5px;
    right: 5px;
    top: 10px;
    height: 4px;
    border-radius: 2px;
    background: #666;
}
.round.plus {
    margin: 0 14px 0 18px;
    border-color: #cfcfcf;
}
.round.minus { margin: 0 0 0 20px; }
.round.plus::before { background: #aaa; }
.round.plus::after {
    content: "";
    position: absolute;
    top: 5px;
    bottom: 5px;
    left: 10px;
    width: 4px;
    border-radius: 2px;
    background: #aaa;
}
.round.plus.dark { border-color: #8c8c8c; }
.round.plus.dark::before,
.round.plus.dark::after { background: #555; }
.ymd {
    margin-left: auto;
    margin-right: 22px;
    color: #828282;
}
```
